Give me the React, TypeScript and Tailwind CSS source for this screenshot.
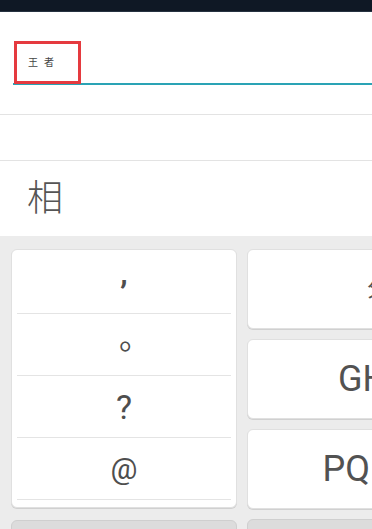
import React from 'react';

const font = { fontFamily: 'Roboto, "Noto Sans CJK SC", sans-serif' };

const symbols = [
    { label: ',', h: 'h-[64px]', cls: 'text-[30px] font-bold -translate-y-[8px]' },
    { label: '。', h: 'h-[62px]', cls: 'text-[32px] translate-x-[11px] -translate-y-[7px]' },
    { label: '?', h: 'h-[62px]', cls: 'text-[34px]' },
    { label: '@', h: 'h-[62px]', cls: 'text-[30px]' },
];

const letterKeys = ['分词', 'GHI', 'PQRS'];

export default function App() {
    return (
        <div
            className="relative w-[372px] h-[529px] overflow-hidden bg-white text-[#505050]"
            style={font}
        >
            {/* strip of the app behind */}
            <div className="h-[12px] bg-[#0f1825] border-b border-[#263241]" />

            {/* input field */}
            <div className="h-[103px] pb-[29px] flex flex-col justify-end border-b border-[#e3e3e3]">
                <div className="ml-[13px] h-[42px] border-b-2 border-[#2aa3b5] flex items-center pl-[15px]">
                    <span className="text-[10px] leading-none tracking-[6px] text-[#444]">王者</span>
                </div>
            </div>

            <div className="h-[46px] border-b border-[#e3e3e3]" />

            {/* candidate row */}
            <div className="h-[75px] flex items-center pl-[27px]">
                <span className="text-[36px] leading-none font-light text-[#555]">相</span>
            </div>

            {/* keyboard */}
            <div className="h-[320px] bg-[#ececec] flex gap-[10px] pl-[11px] pt-[13px]">
                <div className="flex flex-col gap-[12px] shrink-0">
                    <div className="shrink-0 w-[226px] h-[259px] bg-white rounded-[6px] border border-[#e0e0e0] shadow-[0_1px_0_#d0d0d0] px-[5px] pb-[8px]">
                        {symbols.map((s) => (
                            <div
                                key={s.label}
                                className={`${s.h} flex items-center justify-center border-b border-[#e4e4e4]`}
                            >
                                <span className={`${s.cls} leading-none text-[#4e4e4e]`}>{s.label}</span>
                            </div>
                        ))}
                    </div>
                    <div className="shrink-0 w-[226px] h-[40px] bg-[#dcdcdc] rounded-[6px] border border-[#cfcfcf]" />
                </div>

                <div className="flex flex-col gap-[10px] shrink-0">
                    {letterKeys.map((k, i) => (
                        <div
                            key={k}
                            className={`shrink-0 w-[238px] h-[80px] bg-white rounded-[6px] border border-[#e0e0e0] shadow-[0_1px_0_#d0d0d0] flex items-center ${
                                i === 0 ? 'justify-start pl-[119px]' : 'justify-center pl-[4px]'
                            }`}
                        >
                            <span
                                className={`${i === 0 ? 'text-[22px]' : 'text-[36px]'} leading-none text-[#525252]`}
                            >
                                {k}
                            </span>
                        </div>
                    ))}
                    <div className="shrink-0 w-[238px] h-[40px] bg-[#dcdcdc] rounded-[6px] border border-[#cfcfcf]" />
                </div>
            </div>

            {/* highlight box drawn over the input */}
            <div className="absolute left-[14px] top-[41px] w-[67px] h-[43px] border-[3px] border-[#e53a3f]" />
        </div>
    );
}
